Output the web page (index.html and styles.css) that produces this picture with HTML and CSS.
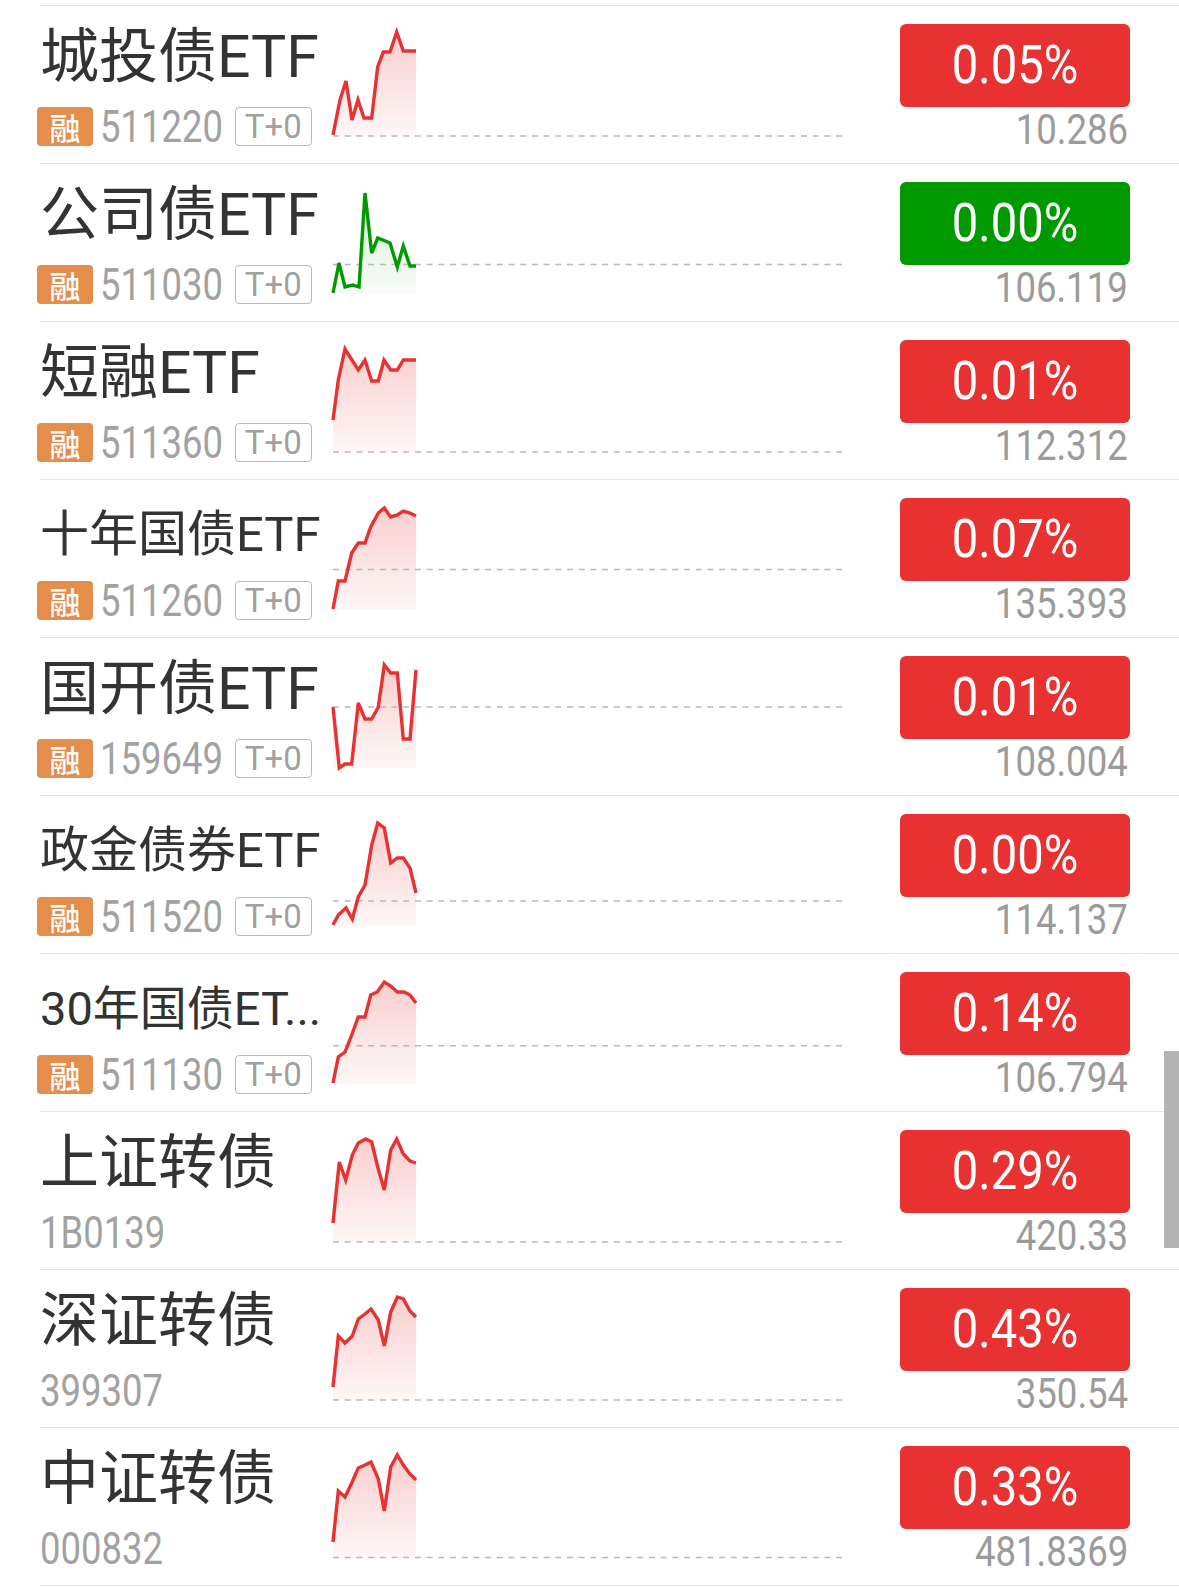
FILE: index.html
```html
<!DOCTYPE html>
<html lang="zh-CN">
<head>
<meta charset="utf-8">
<title>债券ETF</title>
<link rel="stylesheet" href="styles.css">
</head>
<body>
<svg class="defs" width="0" height="0" aria-hidden="true">
  <defs>
    <linearGradient id="gRed" x1="0" y1="0" x2="0" y2="1">
      <stop offset="0" stop-color="#e83232" stop-opacity="0.24"/>
      <stop offset="1" stop-color="#e83232" stop-opacity="0.04"/>
    </linearGradient>
    <linearGradient id="gGreen" x1="0" y1="0" x2="0" y2="1">
      <stop offset="0" stop-color="#009a00" stop-opacity="0.16"/>
      <stop offset="1" stop-color="#009a00" stop-opacity="0.03"/>
    </linearGradient>
  </defs>
</svg>

<div class="list">

  <div class="row">
    <div class="info">
      <div class="name t-lg">城投债ETF</div>
      <div class="meta"><span class="rong">融</span><span class="code">511220</span><span class="t0">T+0</span></div>
    </div>
    <svg class="chart" viewBox="0 1 510 157" width="510" height="157">
      <polygon class="fill-up" points="0,130 7,95 13,76 19,115 25,95 31,113 38.7,113 44.7,62 50.3,47 57,47 63.7,27 70.3,46 83,46 83,131 0,131"/>
      <line class="base" x1="0" y1="131" x2="510" y2="131"/>
      <polyline class="line-up" points="0,130 7,95 13,76 19,115 25,95 31,113 38.7,113 44.7,62 50.3,47 57,47 63.7,27 70.3,46 83,46"/>
    </svg>
    <div class="quote">
      <div class="pct up"><span class="pct-text">0.05%</span></div>
      <div class="price">10.286</div>
    </div>
  </div>

  <div class="row">
    <div class="info">
      <div class="name t-lg">公司债ETF</div>
      <div class="meta"><span class="rong">融</span><span class="code">511030</span><span class="t0">T+0</span></div>
    </div>
    <svg class="chart" viewBox="0 1 510 157" width="510" height="157">
      <polygon class="fill-down" points="0,130 6,100 12,124 19.7,122 26,124 32,30 38.7,90 44.7,75 57,80 64.3,104 70.3,83 77,103 83,103 83,131 0,131"/>
      <line class="base" x1="0" y1="101.5" x2="510" y2="101.5"/>
      <polyline class="line-down" points="0,130 6,100 12,124 19.7,122 26,124 32,30 38.7,90 44.7,75 57,80 64.3,104 70.3,83 77,103 83,103"/>
    </svg>
    <div class="quote">
      <div class="pct down"><span class="pct-text">0.00%</span></div>
      <div class="price">106.119</div>
    </div>
  </div>

  <div class="row">
    <div class="info">
      <div class="name t-lg">短融ETF</div>
      <div class="meta"><span class="rong">融</span><span class="code">511360</span><span class="t0">T+0</span></div>
    </div>
    <svg class="chart" viewBox="0 1 510 157" width="510" height="157">
      <polygon class="fill-up" points="0,99 5.3,59 12,28 25.3,49 32,39 38.7,60 45.3,60 51,39 57.7,49 64.3,49 70.3,39 83,39 83,131 0,131"/>
      <line class="base" x1="0" y1="131" x2="510" y2="131"/>
      <polyline class="line-up" points="0,99 5.3,59 12,28 25.3,49 32,39 38.7,60 45.3,60 51,39 57.7,49 64.3,49 70.3,39 83,39"/>
    </svg>
    <div class="quote">
      <div class="pct up"><span class="pct-text">0.01%</span></div>
      <div class="price">112.312</div>
    </div>
  </div>

  <div class="row">
    <div class="info">
      <div class="name t-md">十年国债ETF</div>
      <div class="meta"><span class="rong">融</span><span class="code">511260</span><span class="t0">T+0</span></div>
    </div>
    <svg class="chart" viewBox="0 1 510 157" width="510" height="157">
      <polygon class="fill-up" points="0,130 5.3,102 12,102 18.7,74 25.3,64 32,64 37.7,48 45.3,34 51.3,29 57.7,38 64.3,36 70.3,32 77,34 83,37 83,131 0,131"/>
      <line class="base" x1="0" y1="90.5" x2="510" y2="90.5"/>
      <polyline class="line-up" points="0,130 5.3,102 12,102 18.7,74 25.3,64 32,64 37.7,48 45.3,34 51.3,29 57.7,38 64.3,36 70.3,32 77,34 83,37"/>
    </svg>
    <div class="quote">
      <div class="pct up"><span class="pct-text">0.07%</span></div>
      <div class="price">135.393</div>
    </div>
  </div>

  <div class="row">
    <div class="info">
      <div class="name t-lg">国开债ETF</div>
      <div class="meta"><span class="rong">融</span><span class="code">159649</span><span class="t0">T+0</span></div>
    </div>
    <svg class="chart" viewBox="0 1 510 157" width="510" height="157">
      <polygon class="fill-up" points="0,70 6.3,131 12,127 18.7,127 25.3,66 32,82 38.7,82 45.3,70 51.3,28 57.7,36 64.3,36 70.3,102 77,102 83,33 83,131 0,131"/>
      <line class="base" x1="0" y1="70" x2="510" y2="70"/>
      <polyline class="line-up" points="0,70 6.3,131 12,127 18.7,127 25.3,66 32,82 38.7,82 45.3,70 51.3,28 57.7,36 64.3,36 70.3,102 77,102 83,33"/>
    </svg>
    <div class="quote">
      <div class="pct up"><span class="pct-text">0.01%</span></div>
      <div class="price">108.004</div>
    </div>
  </div>

  <div class="row">
    <div class="info">
      <div class="name t-md">政金债券ETF</div>
      <div class="meta"><span class="rong">融</span><span class="code">511520</span><span class="t0">T+0</span></div>
    </div>
    <svg class="chart" viewBox="0 1 510 157" width="510" height="157">
      <polygon class="fill-up" points="0,130 5.3,120 13,113 19.3,124 25.3,102 32,90 38.7,50 44.7,28 51.3,33 57.7,68 64.3,63 70.3,63 77,73 83,98 83,131 0,131"/>
      <line class="base" x1="0" y1="106" x2="510" y2="106"/>
      <polyline class="line-up" points="0,130 5.3,120 13,113 19.3,124 25.3,102 32,90 38.7,50 44.7,28 51.3,33 57.7,68 64.3,63 70.3,63 77,73 83,98"/>
    </svg>
    <div class="quote">
      <div class="pct up"><span class="pct-text">0.00%</span></div>
      <div class="price">114.137</div>
    </div>
  </div>

  <div class="row">
    <div class="info">
      <div class="name t-sm">30年国债ET...</div>
      <div class="meta"><span class="rong">融</span><span class="code">511130</span><span class="t0">T+0</span></div>
    </div>
    <svg class="chart" viewBox="0 1 510 157" width="510" height="157">
      <polygon class="fill-up" points="0,130 5.3,104 12,99 18.7,82 25.3,64 32,64 37.7,42 44.3,39 51.3,29 57.7,33 64.3,39 71,39 77,42 83,50 83,131 0,131"/>
      <line class="base" x1="0" y1="92.7" x2="510" y2="92.7"/>
      <polyline class="line-up" points="0,130 5.3,104 12,99 18.7,82 25.3,64 32,64 37.7,42 44.3,39 51.3,29 57.7,33 64.3,39 71,39 77,42 83,50"/>
    </svg>
    <div class="quote">
      <div class="pct up"><span class="pct-text">0.14%</span></div>
      <div class="price">106.794</div>
    </div>
  </div>

  <div class="row">
    <div class="info">
      <div class="name t-lg">上证转债</div>
      <div class="meta"><span class="code">1B0139</span></div>
    </div>
    <svg class="chart" viewBox="0 1 510 157" width="510" height="157">
      <polygon class="fill-up" points="0,112 6.3,51 12.7,69 19.3,44 25.3,32 32.7,28 38.7,31 44.7,56 51.3,79 57.7,39 63.7,28 70.3,43 77,50 83,52 83,131 0,131"/>
      <line class="base" x1="0" y1="131" x2="510" y2="131"/>
      <polyline class="line-up" points="0,112 6.3,51 12.7,69 19.3,44 25.3,32 32.7,28 38.7,31 44.7,56 51.3,79 57.7,39 63.7,28 70.3,43 77,50 83,52"/>
    </svg>
    <div class="quote">
      <div class="pct up"><span class="pct-text">0.29%</span></div>
      <div class="price">420.33</div>
    </div>
  </div>

  <div class="row">
    <div class="info">
      <div class="name t-lg">深证转债</div>
      <div class="meta"><span class="code">399307</span></div>
    </div>
    <svg class="chart" viewBox="0 1 510 157" width="510" height="157">
      <polygon class="fill-up" points="0,118 5.3,67 12,74 19.3,67 25.3,50 32,45 38,40 45.3,51 51.3,77 57.7,43 64.3,28 70.3,30 77,42 83,48 83,131 0,131"/>
      <line class="base" x1="0" y1="131" x2="510" y2="131"/>
      <polyline class="line-up" points="0,118 5.3,67 12,74 19.3,67 25.3,50 32,45 38,40 45.3,51 51.3,77 57.7,43 64.3,28 70.3,30 77,42 83,48"/>
    </svg>
    <div class="quote">
      <div class="pct up"><span class="pct-text">0.43%</span></div>
      <div class="price">350.54</div>
    </div>
  </div>

  <div class="row">
    <div class="info">
      <div class="name t-lg">中证转债</div>
      <div class="meta"><span class="code">000832</span></div>
    </div>
    <svg class="chart" viewBox="0 1 510 157" width="510" height="157">
      <polygon class="fill-up" points="0,115 5.3,64 12,70 18.7,56 25.3,41 32,38 38,35 45.3,52 51.3,84 57.7,40 64.3,28 70.3,38 77,47 83,53 83,131 0,131"/>
      <line class="base" x1="0" y1="130.5" x2="510" y2="130.5"/>
      <polyline class="line-up" points="0,115 5.3,64 12,70 18.7,56 25.3,41 32,38 38,35 45.3,52 51.3,84 57.7,40 64.3,28 70.3,38 77,47 83,53"/>
    </svg>
    <div class="quote">
      <div class="pct up"><span class="pct-text">0.33%</span></div>
      <div class="price">481.8369</div>
    </div>
  </div>

</div>

<div class="scrollbar"></div>
</body>
</html>
```

FILE: styles.css
```css
html, body {
  margin: 0;
  padding: 0;
  background: #ffffff;
}

body {
  width: 1179px;
  height: 1588px;
  overflow: hidden;
  position: relative;
  font-family: Roboto, "Noto Sans CJK SC", sans-serif;
}

.defs {
  position: absolute;
  width: 0;
  height: 0;
}

.list {
  padding-top: 5px;
  padding-left: 40px;
}

.row {
  display: flex;
  height: 157px;
  border-top: 1px solid #e6e6e6;
  padding-right: 49px;
}

.row:last-child {
  border-bottom: 1px solid #e6e6e6;
}

.info {
  width: 293px;
  flex: none;
  display: flex;
  flex-direction: column;
}

.name {
  height: 79px;
  box-sizing: border-box;
  line-height: 64px;
  color: #333333;
  white-space: nowrap;
  font-family: Roboto, "Noto Sans CJK SC", sans-serif;
}

.t-lg {
  font-size: 59px;
  padding-top: 19px;
}

.t-md {
  font-size: 49px;
  padding-top: 23px;
}

.t-sm {
  font-size: 47px;
  padding-top: 23px;
}

.meta {
  margin-top: 22px;
  height: 39px;
  display: flex;
  align-items: center;
}

.rong {
  width: 56px;
  height: 39px;
  margin-left: -3px;
  margin-right: 7px;
  border-radius: 4px;
  background: #e58d4a;
  color: #ffffff;
  font-size: 31px;
  font-weight: 500;
  line-height: 39px;
  text-align: center;
  font-family: "Noto Sans CJK SC", sans-serif;
}

.code {
  display: inline-block;
  font-family: Roboto, sans-serif;
  font-size: 45px;
  line-height: 39px;
  color: #a2a2a2;
  transform: scaleX(0.81);
  transform-origin: left center;
  margin-right: -29px;
}

.t0 {
  margin-left: 12px;
  width: 77px;
  height: 39px;
  box-sizing: border-box;
  border: 1px solid #b8b8b8;
  border-radius: 4px;
  font-family: Roboto, sans-serif;
  font-size: 33px;
  line-height: 37px;
  color: #a0a0a0;
  text-align: center;
}

.chart {
  flex: none;
  display: block;
  overflow: visible;
}

.fill-up {
  fill: url(#gRed);
  stroke: none;
}

.fill-down {
  fill: url(#gGreen);
  stroke: none;
}

.line-up,
.line-down {
  fill: none;
  stroke-width: 3.4;
  stroke-linejoin: miter;
  stroke-linecap: butt;
}

.line-up {
  stroke: #e83232;
}

.line-down {
  stroke: #009a00;
}

.base {
  stroke: #b9b9b9;
  stroke-width: 1.5;
  stroke-dasharray: 6 5.7;
}

.quote {
  margin-left: auto;
  width: 230px;
  display: flex;
  flex-direction: column;
  align-items: flex-end;
}

.pct {
  margin-top: 18px;
  width: 230px;
  height: 83px;
  border-radius: 6px;
  color: #ffffff;
  text-align: center;
  font-family: Roboto, sans-serif;
  font-size: 53px;
  line-height: 83px;
}

.pct-text {
  display: inline-block;
  transform: scaleX(0.89);
  transform-origin: center center;
}

.pct.up {
  background: #e83232;
}

.pct.down {
  background: #009a00;
}

.price {
  margin-top: 3px;
  margin-right: 2px;
  font-family: Roboto, sans-serif;
  font-size: 42px;
  line-height: 40px;
  color: #9b9b9b;
  transform: scaleX(0.87);
  transform-origin: right center;
}

.scrollbar {
  position: absolute;
  left: 1164px;
  top: 1051px;
  width: 15px;
  height: 197px;
  background: #b3b3b3;
}
```
